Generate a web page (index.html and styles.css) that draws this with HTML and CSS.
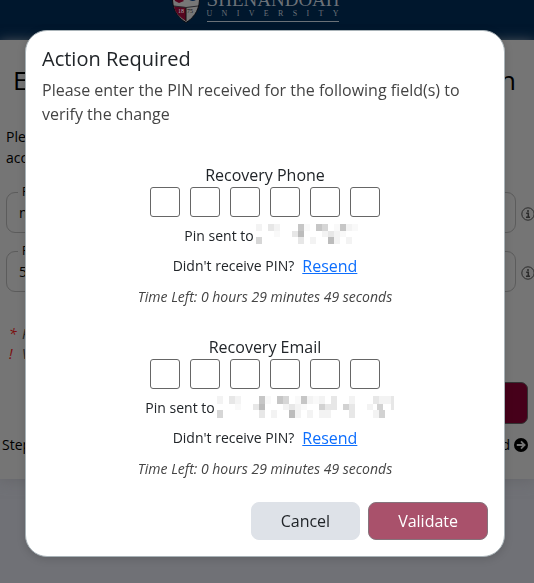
FILE: index.html
```html
<!DOCTYPE html>
<html lang="en">
<head>
<meta charset="utf-8">
<meta name="viewport" content="width=device-width, initial-scale=1">
<title>Action Required</title>
<link rel="stylesheet" href="styles.css">
</head>
<body>
<div class="page">
  <header class="site-header">
    <svg class="shield" viewBox="0 0 28 36" aria-hidden="true">
      <path d="M0.5 0H27.5V13C27 25 20 32 14 35.5C8 32 1 25 0.5 13Z" fill="#777" stroke="#0b0b10" stroke-width="1"/>
      <path d="M2 19Q8 20 14 20V34C8 30 3 26 2 19Z" fill="#56051f"/>
      <path d="M14 20V34" stroke="#111" stroke-width="1"/>
      <path d="M2 19Q14 22 26 19" fill="none" stroke="#28282c" stroke-width="1"/>
      <path d="M16 12Q21 16 25 12V9H17Z" fill="#062448"/>
      <path d="M2 10H8L12 14L7 16L3 14Z" fill="#56051f"/>
      <text x="6" y="26" class="shield-year light">18</text>
      <text x="15" y="26" class="shield-year">75</text>
    </svg>
    <div class="wordmark">
      <span class="wordmark-name">S<small>HENANDOAH</small></span>
      <span class="wordmark-sub"><span>U</span><span>N</span><span>I</span><span>V</span><span>E</span><span>R</span><span>S</span><span>I</span><span>T</span><span>Y</span></span>
    </div>
  </header>
  <main class="card">
    <h1 class="page-title"><span>E</span><span>n</span></h1>
    <p class="intro">Please<br>account</p>
    <div class="field-row">
      <div class="field"><label for="email">Recovery Email</label><input id="email" type="text" value="n"></div>
      <svg class="info" viewBox="0 0 14 14" aria-hidden="true"><circle cx="7" cy="7" r="6.2" fill="none" stroke="#2b2b2b"/><path d="M7 3v2M5.2 6.3H7.3V10M5 10.3H9" fill="none" stroke="#2b2b2b" stroke-width="1.5"/></svg>
    </div>
    <div class="field-row">
      <div class="field"><label for="phone">Recovery Phone</label><input id="phone" type="text" value="5"></div>
      <svg class="info" viewBox="0 0 14 14" aria-hidden="true"><circle cx="7" cy="7" r="6.2" fill="none" stroke="#2b2b2b"/><path d="M7 3v2M5.2 6.3H7.3V10M5 10.3H9" fill="none" stroke="#2b2b2b" stroke-width="1.5"/></svg>
    </div>
    <p class="note"><b>*</b>Required</p>
    <p class="note"><b>!</b>Verify</p>
    <button class="save" type="button" aria-label="Save"></button>
    <div class="steps">
      <span>Step</span>
      <span class="forward">d <svg viewBox="0 0 14 14" aria-hidden="true"><circle cx="7" cy="7" r="7" fill="#000"/><path d="M2.8 7H10.5M7 3.4L10.6 7L7 10.6" fill="none" stroke="#757575" stroke-width="1.8"/></svg></span>
    </div>
  </main>
</div>

<div class="overlay">
  <section class="modal" role="dialog" aria-modal="true" aria-labelledby="modal-title">
    <h2 id="modal-title" class="modal-title">Action Required</h2>
    <p class="modal-text">Please enter the PIN received for the following field(s) to verify the change</p>

    <fieldset class="pin-group">
      <legend>Recovery Phone</legend>
      <div class="pin-boxes">
        <input type="text" maxlength="1" aria-label="Phone digit 1"><input type="text" maxlength="1" aria-label="Phone digit 2"><input type="text" maxlength="1" aria-label="Phone digit 3"><input type="text" maxlength="1" aria-label="Phone digit 4"><input type="text" maxlength="1" aria-label="Phone digit 5"><input type="text" maxlength="1" aria-label="Phone digit 6">
      </div>
      <div class="sent">Pin sent to
        <svg class="mask" width="90" height="20" shape-rendering="crispEdges" aria-hidden="true">
          <g id="mask-start">
            <path fill="#f3f3f3" d="M0 0h6v7h-6zM18 0h6v7h-6zM90 0h6v7h-6zM66 7h6v6h-6zM78 7h6v6h-6zM54 13h6v7h-6zM78 13h6v7h-6zM90 13h6v7h-6z"/>
            <path fill="#f9f9f9" d="M48 0h6v7h-6zM78 0h6v7h-6zM96 0h6v7h-6zM18 7h6v6h-6zM84 7h6v6h-6z"/>
            <path fill="#e7e7e7" d="M12 0h6v7h-6zM36 7h6v6h-6zM72 7h6v6h-6zM42 13h6v7h-6z"/>
            <path fill="#d6d6d6" d="M66 0h6v7h-6zM0 13h6v7h-6z"/>
            <path fill="#c6c6c6" d="M42 0h6v7h-6zM60 0h6v7h-6zM84 0h6v7h-6z"/>
            <path fill="#bcbcbc" d="M42 7h6v6h-6zM72 13h6v7h-6z"/>
          </g>
        </svg>
      </div>
      <div class="resend">Didn't receive PIN? <a href="#">Resend</a></div>
      <p class="timer">Time Left: 0 hours 29 minutes 49 seconds</p>
    </fieldset>

    <fieldset class="pin-group">
      <legend>Recovery Email</legend>
      <div class="pin-boxes">
        <input type="text" maxlength="1" aria-label="Email digit 1"><input type="text" maxlength="1" aria-label="Email digit 2"><input type="text" maxlength="1" aria-label="Email digit 3"><input type="text" maxlength="1" aria-label="Email digit 4"><input type="text" maxlength="1" aria-label="Email digit 5"><input type="text" maxlength="1" aria-label="Email digit 6">
      </div>
      <div class="sent">Pin sent to
        <svg class="mask" width="168" height="22" viewBox="0 0 168 20" preserveAspectRatio="none" shape-rendering="crispEdges" aria-hidden="true">
          <use href="#mask-start"/>
          <path fill="#f3f3f3" d="M102 0h6v7h-6zM132 0h6v7h-6zM162 0h6v7h-6zM168 0h6v7h-6zM150 7h6v6h-6zM102 13h6v7h-6zM108 13h6v7h-6zM156 13h6v7h-6z"/>
          <path fill="#e7e7e7" d="M114 0h6v7h-6zM156 0h6v7h-6zM174 0h3v7h-3zM108 7h12v6h-12zM132 7h6v6h-6zM174 7h3v6h-3zM132 13h6v7h-6z"/>
          <path fill="#d2d2d2" d="M102 7h6v6h-6zM126 7h6v6h-6zM160 7h6v6h-6zM162 13h6v7h-6z"/>
        </svg>
      </div>
      <div class="resend">Didn't receive PIN? <a href="#">Resend</a></div>
      <p class="timer">Time Left: 0 hours 29 minutes 49 seconds</p>
    </fieldset>

    <footer class="actions">
      <button class="btn cancel" type="button">Cancel</button>
      <button class="btn validate" type="button">Validate</button>
    </footer>
  </section>
</div>
</body>
</html>
```
FILE: styles.css
```css
* { box-sizing: border-box; }

html, body { height: 100%; }

body {
  margin: 0;
  overflow: hidden;
  font-family: "Open Sans", "Noto Sans", sans-serif;
  font-size: 14px;
  line-height: 24px;
  color: #212529;
  background: #707176;
}

h1, h2, p, fieldset { margin: 0; }

/* Dimmed page behind the dialog */
.site-header {
  display: flex;
  justify-content: center;
  align-items: flex-end;
  gap: 7px;
  height: 40px;
  padding: 0 24px 17px 0;
  overflow: hidden;
  background: #00172d;
}

.shield { width: 28px; height: 36px; flex: none; }
.shield-year { font: 6px "Liberation Serif", serif; fill: #111; }
.shield-year.light { fill: #aaa; }

.wordmark {
  width: 132px;
  margin-bottom: 1px;
  font-family: "Liberation Serif", serif;
  color: #6b7178;
  border-bottom: 1px solid #6b7178;
}
.wordmark-name { display: block; font-size: 21px; line-height: 18px; white-space: nowrap; }
.wordmark-name small { font-size: 19px; }
.wordmark-sub {
  display: flex;
  justify-content: space-between;
  font-size: 8px;
  line-height: 10px;
  padding-bottom: 2px;
}

.card {
  padding: 24px 6px;
  color: #000;
  background: #757575;
  box-shadow: 0 2px 12px #66676b;
}

.page-title {
  display: flex;
  justify-content: space-between;
  padding: 0 12px 0 7px;
  font-size: 26px;
  font-weight: 400;
  line-height: 32px;
}
.intro { margin-top: 30px; line-height: 21px; }

.field-row { display: flex; align-items: center; gap: 5px; margin: 18px -7px 0 0; }
.intro + .field-row { margin-top: 24px; }
.field { position: relative; flex: 1; }
.field label {
  position: absolute;
  top: -9px;
  left: 12px;
  padding: 0 4px;
  font-size: 12px;
  line-height: 18px;
  background: #757575;
}
.field input {
  display: block;
  width: 100%;
  height: 41px;
  padding: 0 12px;
  font: inherit;
  color: #000;
  background: none;
  border: 1px solid #5c5c5c;
  border-radius: 9px;
}
.info { width: 14px; height: 14px; flex: none; margin-top: 3px; }

.note { padding-left: 3px; font-style: italic; line-height: 20px; color: #222; }
.field-row + .note { margin-top: 32px; }
.note b { display: inline-block; width: 13px; font-weight: 400; color: #7c0b0b; }

.save {
  display: block;
  width: 50%;
  height: 42px;
  margin: 18px 0 0 auto;
  background: #46001a;
  border: 1px solid #333;
  border-radius: 7px;
}

.steps { display: flex; justify-content: space-between; margin: 9px 0 -2px -4px; }
.forward { display: flex; align-items: center; gap: 4px; }
.forward svg { width: 14px; height: 14px; }

/* Dialog */
.overlay {
  position: fixed;
  inset: 0;
  padding: 30px 29px 27px 25px;
}

.modal {
  max-width: 500px;
  margin: 0 auto;
  padding: 13px 16px 16px;
  background: #fff;
  border: 1px solid #a9b3b8;
  border-radius: 22px;
  box-shadow: 0 2px 8px rgb(0 0 0 / 15%);
}

.modal-title { font-size: 20px; font-weight: 400; line-height: 30px; }
.modal-text { margin-top: 4px; font-size: 16px; color: #444; }

.pin-group {
  display: flex;
  flex-direction: column;
  align-items: center;
  margin-top: 26px;
  padding: 0;
  border: 0;
}
.modal-text + .pin-group { margin-top: 37px; }
.pin-group legend { margin: 0 auto; padding: 0; font-size: 16px; }

.pin-boxes { display: flex; gap: 10px; }
.pin-boxes input {
  width: 30px;
  height: 30px;
  padding: 0;
  text-align: center;
  font: inherit;
  background: #fff;
  border: 1px solid #666;
  border-radius: 3px;
}

.sent { display: flex; gap: 2px; margin-top: 7px; }
.mask { overflow: visible; }
.resend { display: flex; gap: 8px; margin-top: 6px; }
.resend a { font-size: 16px; color: #0d6efd; }
.timer { margin-top: 7px; font-size: 14px; font-style: italic; color: #444; }

.actions { display: flex; justify-content: flex-end; gap: 8px; margin-top: 21px; }
.btn {
  height: 38px;
  padding: 0 29px;
  font: inherit;
  font-size: 16px;
  color: #212529;
  background: #dee2e8;
  border: 1px solid #dee2e8;
  border-radius: 8px;
}
.validate { color: #fff; background: #a9516b; border-color: #86737c; }
```
